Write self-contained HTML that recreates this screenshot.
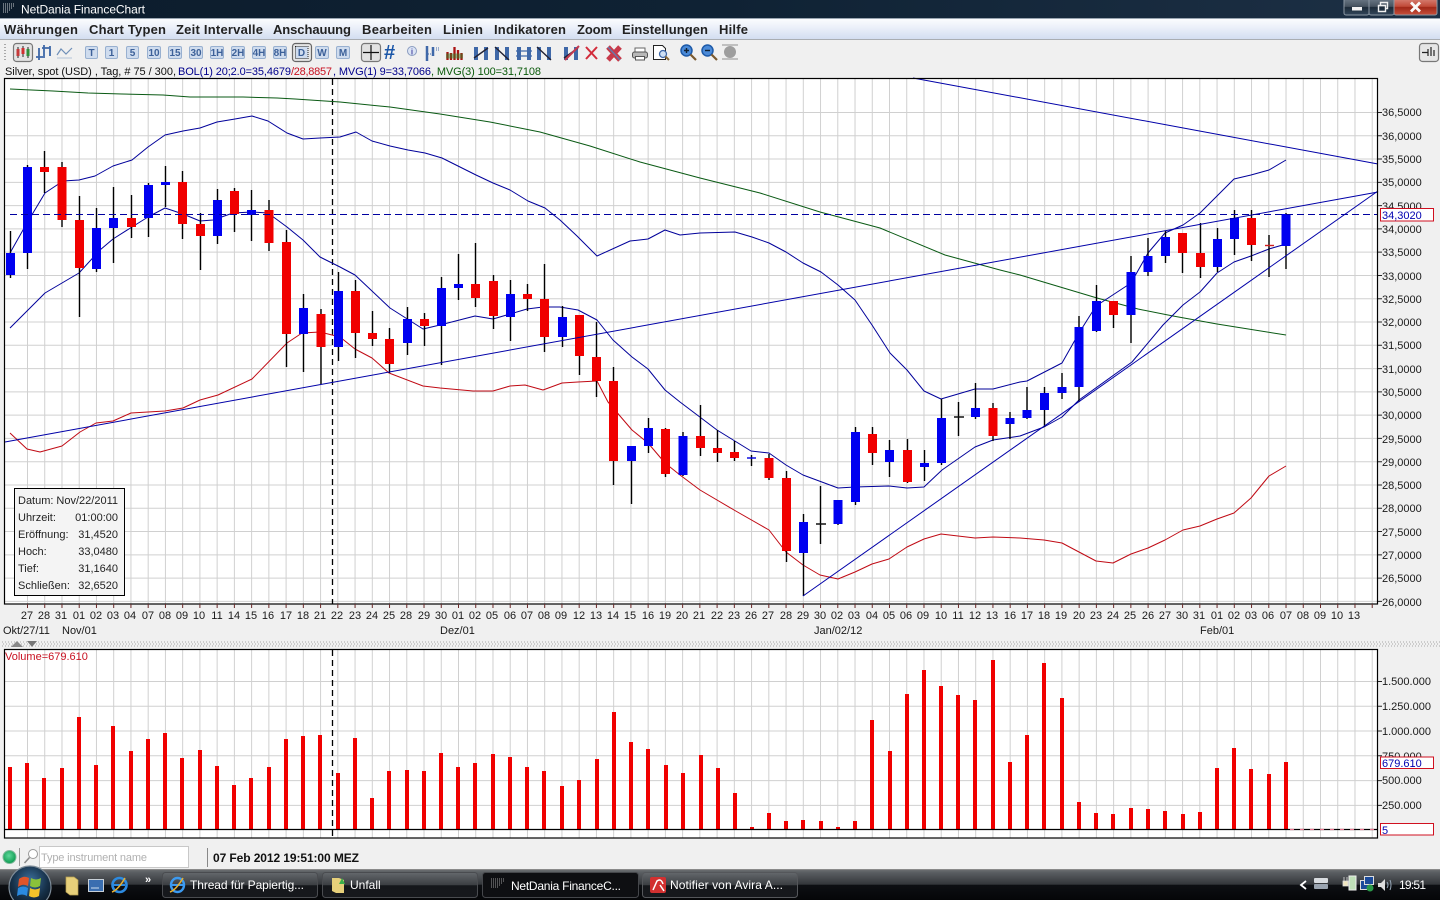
<!DOCTYPE html>
<html lang="de">
<head>
<meta charset="utf-8">
<title>NetDania FinanceChart</title>
<style>
html,body{margin:0;padding:0;width:1440px;height:900px;overflow:hidden;background:#f0f0f0}
svg{display:block;font-family:"Liberation Sans",Arial,sans-serif}
.ax{font-size:11px;fill:#1a1a1a}
.tb{font-size:10px;font-weight:bold;fill:#3d6199;text-anchor:middle}
.mn{font-size:13px;font-weight:bold;fill:#222}
.task{font-size:12px;fill:#fff}
.inf{font-size:11px;fill:#222}
</style>
</head>
<body>
<svg width="1440" height="900" viewBox="0 0 1440 900" xmlns="http://www.w3.org/2000/svg">
<defs>
<linearGradient id="gTitle" x1="0" x2="1" y1="0" y2="0"><stop offset="0" stop-color="#0c1c2c"/><stop offset=".5" stop-color="#0f2234"/><stop offset="1" stop-color="#1d3045"/></linearGradient>
<linearGradient id="gMenu" x1="0" x2="0" y1="0" y2="1"><stop offset="0" stop-color="#fbfcfe"/><stop offset=".35" stop-color="#eef2fa"/><stop offset="1" stop-color="#d3def1"/></linearGradient>
<linearGradient id="gBar" x1="0" x2="0" y1="0" y2="1"><stop offset="0" stop-color="#6a6d70"/><stop offset=".08" stop-color="#5a5e62"/><stop offset=".48" stop-color="#33363a"/><stop offset=".5" stop-color="#0d0f13"/><stop offset="1" stop-color="#050608"/></linearGradient>
<linearGradient id="gBtn" x1="0" x2="0" y1="0" y2="1"><stop offset="0" stop-color="#64686c"/><stop offset=".5" stop-color="#3b3e42"/><stop offset=".52" stop-color="#15171b"/><stop offset="1" stop-color="#16181c"/></linearGradient>
<linearGradient id="gCtl" x1="0" x2="0" y1="0" y2="1"><stop offset="0" stop-color="#6f7c8a"/><stop offset=".5" stop-color="#46525f"/><stop offset=".55" stop-color="#1c2a38"/><stop offset="1" stop-color="#33465a"/></linearGradient>
<linearGradient id="gClose" x1="0" x2="0" y1="0" y2="1"><stop offset="0" stop-color="#d8867a"/><stop offset=".5" stop-color="#c14a38"/><stop offset=".55" stop-color="#a02818"/><stop offset="1" stop-color="#c8503c"/></linearGradient>
<radialGradient id="gOrb" cx=".5" cy=".35" r=".7"><stop offset="0" stop-color="#3c6f9c"/><stop offset=".6" stop-color="#163048"/><stop offset="1" stop-color="#0a1420"/></radialGradient>
<radialGradient id="gLed" cx=".45" cy=".4" r=".6"><stop offset="0" stop-color="#5fd89a"/><stop offset="1" stop-color="#0c9a50"/></radialGradient>
<g id="t1" fill="none"><path d="M3 2V15M13 2V15" stroke="#3f68a8" stroke-width="4"/><path d="M1 13L15 3" stroke="#223" stroke-width="1.400"/></g>
<g id="t2" fill="none"><path d="M3 2V15M13 2V15" stroke="#3f68a8" stroke-width="4"/><path d="M1 2L15 15" stroke="#223" stroke-width="1.400"/></g>
<g id="t3" fill="none"><path d="M3 2V15M13 2V15" stroke="#3f68a8" stroke-width="4"/><path d="M0 6H16M0 11H16" stroke="#3f68a8" stroke-width="1.200"/></g>
</defs>

<rect width="1440" height="900" fill="#f0f0f0"/>

<!-- title bar -->
<rect width="1440" height="18" fill="url(#gTitle)"/>
<rect y="18" width="1440" height="1" fill="#9aa6b2"/>
<path d="M3 4H15M3 6H15M3 8H13M3 10H11M3 12H9" stroke="#c8ccd0" stroke-width="1" stroke-dasharray="1 1"/>
<text x="21" y="13.500" font-size="12" fill="#fff" textLength="124" lengthAdjust="spacing">NetDania FinanceChart</text>
<rect x="1344" y="-2" width="25" height="17" rx="2" fill="url(#gCtl)" stroke="#8c98a4"/>
<rect x="1369" y="-2" width="25" height="17" rx="2" fill="url(#gCtl)" stroke="#8c98a4"/>
<rect x="1394" y="-2" width="43" height="17" rx="2" fill="url(#gClose)" stroke="#8c98a4"/>
<rect x="1352" y="7" width="10" height="3.500" fill="#f2f2f2"/>
<path d="M1378.500 5.500h7v6h-7zM1380.500 5V2.500h7v6h-2" fill="none" stroke="#f0f0f0" stroke-width="1.400"/>
<path d="M1411 2.500L1420 11.500M1420 2.500L1411 11.500" stroke="#fafafa" stroke-width="2.800"/>

<!-- menu -->
<rect y="19" width="1440" height="20" fill="url(#gMenu)"/>
<rect y="39" width="1440" height="1" fill="#a9adb2"/>
<text class="mn" x="4" y="34" textLength="74" lengthAdjust="spacing">Währungen</text>
<text class="mn" x="89" y="34" textLength="77" lengthAdjust="spacing">Chart Typen</text>
<text class="mn" x="176" y="34" textLength="87" lengthAdjust="spacing">Zeit Intervalle</text>
<text class="mn" x="273" y="34" textLength="78" lengthAdjust="spacing">Anschauung</text>
<text class="mn" x="362" y="34" textLength="70" lengthAdjust="spacing">Bearbeiten</text>
<text class="mn" x="443" y="34" textLength="40" lengthAdjust="spacing">Linien</text>
<text class="mn" x="494" y="34" textLength="72" lengthAdjust="spacing">Indikatoren</text>
<text class="mn" x="577" y="34" textLength="35" lengthAdjust="spacing">Zoom</text>
<text class="mn" x="622" y="34" textLength="86" lengthAdjust="spacing">Einstellungen</text>
<text class="mn" x="719" y="34" textLength="29" lengthAdjust="spacing">Hilfe</text>

<!-- toolbar -->
<path d="M5 44V62" stroke="#a8a8a8" stroke-width="2" stroke-dasharray="1 2"/>
<rect x="13.500" y="43.500" width="19" height="18" rx="3" fill="#e4e4e4" stroke="#777" stroke-width="1.200"/>
<path d="M18 47V58M23 46V57M28 47V58" stroke="#222" stroke-width="1"/>
<rect x="16.500" y="49" width="3" height="7" fill="#c53a3a"/><rect x="21.500" y="48" width="3" height="6" fill="#d03030"/><rect x="26.500" y="49" width="3" height="7" fill="#2f8f3a"/>
<path d="M39 48V60M44 45V56M50 46V56M36 57H45M42 48H50" fill="none" stroke="#3f68a8" stroke-width="1.800"/>
<path d="M57 55L61 49L66 54L72 48" fill="none" stroke="#6f8fb8" stroke-width="1.200"/><path d="M57 58H72" stroke="#b4c4d8"/>

<g fill="#cfdcee" stroke="#98b0d0">
<rect x="85.500" y="46.500" width="12" height="12" rx="1.500"/>
<rect x="105.500" y="46.500" width="12" height="12" rx="1.500"/>
<rect x="126.500" y="46.500" width="12" height="12" rx="1.500"/>
<rect x="147.500" y="46.500" width="13" height="12" rx="1.500"/>
<rect x="168.500" y="46.500" width="13" height="12" rx="1.500"/>
<rect x="189.500" y="46.500" width="13" height="12" rx="1.500"/>
<rect x="210.500" y="46.500" width="13" height="12" rx="1.500"/>
<rect x="231.500" y="46.500" width="13" height="12" rx="1.500"/>
<rect x="252.500" y="46.500" width="13" height="12" rx="1.500"/>
<rect x="273.500" y="46.500" width="13" height="12" rx="1.500"/>
<rect x="315.500" y="46.500" width="13" height="12" rx="1.500"/>
<rect x="336.500" y="46.500" width="13" height="12" rx="1.500"/>
</g>
<rect x="292.500" y="43.500" width="19" height="18" rx="3" fill="#e6e6e6" stroke="#666" stroke-width="1.200"/>
<rect x="295.500" y="46.500" width="12.500" height="12" fill="#cfdcee" stroke="#222" stroke-dasharray="1 1"/>
<text class="tb" x="91.500" y="56">T</text><text class="tb" x="111.500" y="56">1</text><text class="tb" x="132.500" y="56">5</text>
<text class="tb" x="154" y="56">10</text><text class="tb" x="175" y="56">15</text><text class="tb" x="196" y="56">30</text>
<text class="tb" x="217" y="56">1H</text><text class="tb" x="238" y="56">2H</text><text class="tb" x="259" y="56">4H</text><text class="tb" x="280" y="56">8H</text>
<text class="tb" x="301.500" y="56">D</text><text class="tb" x="322" y="56">W</text><text class="tb" x="343" y="56">M</text>

<rect x="361.500" y="43.500" width="19" height="18" rx="3" fill="#e2e2e2" stroke="#777" stroke-width="1.200"/>
<path d="M371 45V60M363 52.500H379" stroke="#111" stroke-width="1.200"/>
<text x="384" y="59" font-size="20" font-weight="bold" fill="#1a56a8">#</text>
<circle cx="412" cy="51" r="4.500" fill="#dbe4f4" stroke="#8a9cc0"/><text x="412" y="54.500" font-size="8" font-weight="bold" fill="#5050a8" text-anchor="middle">i</text>
<path d="M427 46V61M433 47V56" stroke="#3f68a8" stroke-width="2.500"/><path d="M436 48H440M436 50H440M426 54H431" stroke="#3f68a8" stroke-dasharray="1 1"/>
<path d="M447.500 52V60M451 53V60M454.500 47V60M458 50V60M461.500 53V60" stroke="#a11" stroke-width="2.300"/><path d="M446 56H463" stroke="#2a8a2a" stroke-width="5" opacity=".45"/>
<use href="#t1" x="473" y="45"/><use href="#t2" x="494" y="45"/><use href="#t3" x="516" y="45"/><use href="#t2" x="536" y="45"/>
<use href="#t1" x="563" y="45"/><path d="M565 60L579 46" stroke="#c23a50" stroke-width="2"/>
<path d="M586 47L597 59M597 47L586 59" stroke="#d22b3a" stroke-width="2"/>
<path d="M608 47L620 60M620 47L608 60" stroke="#c73a4a" stroke-width="5"/><path d="M608 47L620 60" stroke="#6a78a8" stroke-width="1.500"/>
<path d="M635 48h10v4h-10z" fill="#fff" stroke="#666"/><rect x="632.500" y="52" width="15" height="6" rx="2" fill="#b8b8b8" stroke="#555"/><rect x="635.500" y="56.500" width="9" height="3.500" fill="#fff" stroke="#555"/>
<path d="M653.500 45.500h9l3 3v11h-12z" fill="#fff" stroke="#222"/><circle cx="663" cy="54" r="3.500" fill="#cfe0f4" stroke="#3f68a8" stroke-width="1.300"/><path d="M665.500 56.500L669 60" stroke="#8a6a3a" stroke-width="2"/>
<circle cx="686.500" cy="50.500" r="5.500" fill="#4a8ad8" stroke="#1d5aa8" stroke-width="1.500"/><path d="M684 50.500H689M686.500 48V53" stroke="#123" stroke-width="1.400"/><path d="M690.500 54.500L696 60" stroke="#7a5a30" stroke-width="2.200"/>
<circle cx="707.500" cy="50.500" r="5.500" fill="#4a8ad8" stroke="#1d5aa8" stroke-width="1.500"/><path d="M705 50.500H710" stroke="#123" stroke-width="1.400"/><path d="M711.500 54.500L717 60" stroke="#7a5a30" stroke-width="2.200"/>
<circle cx="730" cy="52" r="6" fill="#9e9e9e"/><path d="M722 45H738M722 59H738" stroke="#b0b0b0" stroke-width="1.400"/>
<rect x="1419.500" y="43.500" width="19" height="18" rx="3" fill="#e6e6e6" stroke="#777" stroke-width="1.200"/>
<path d="M1422 52.500H1428M1428 49V56M1431 47V56M1434 50V56" stroke="#222" stroke-width="1.200"/>

<!-- legend line -->
<text x="5" y="75" font-size="11" fill="#111" textLength="171" lengthAdjust="spacing">Silver, spot (USD) , Tag, # 75 / 300,</text>
<text x="178" y="75" font-size="11" fill="#00008c" textLength="113" lengthAdjust="spacing">BOL(1) 20;2.0=35,4679</text>
<text x="291" y="75" font-size="11" fill="#c81020" textLength="41" lengthAdjust="spacing">/28,8857</text>
<text x="333" y="75" font-size="11" fill="#00008c" textLength="98" lengthAdjust="spacing">, MVG(1) 9=33,7066</text>
<text x="431" y="75" font-size="11" fill="#0a5a0a" textLength="110" lengthAdjust="spacing">, MVG(3) 100=31,7108</text>

<!-- main chart -->
<rect x="5" y="78" width="1373" height="526" fill="#fff"/>
<line x1="27" y1="341" x2="1376" y2="341" stroke="#d0d0d0" stroke-width="525" stroke-dasharray="1 16.240"/>
<line x1="691" y1="112" x2="691" y2="603" stroke="#d0d0d0" stroke-width="1372" stroke-dasharray="1 22.280"/>

<path d="M332.500 79V604" stroke="#000" stroke-width="1.300" stroke-dasharray="6 4"/>

<g fill="none" stroke-linejoin="round">
<path d="M10 89L53 91L88 93L122 94L163 95L190 97L243 97L277 98L295 99L340 102L390 107L440 114L490 122L540 132L590 146L640 162L700 178L760 193L820 212L880 228L945 255L1000 270L1020 275L1097 298L1138 309L1173 316L1217 324L1286 335" stroke="#0a5a14" stroke-width="1"/>
<path d="M10 253L23 230L33 213L45 193L63 181L79 180L95 176L113 166L132 160L148 147L165 135L183 131L200 128L217 122L235 119L252 116L268 121L287 133L303 139L320 138L340 137L356 132L372 141L390 146L408 150L425 153L442 158L458 166L476 175L493 183L510 190L528 201L545 208L560 220L577 236L597 256L630 241L648 239L665 230L680 235L700 233L735 232L752 237L769 243L786 252L803 263L821 272L838 285L855 300L872 325L890 353L907 370L924 391L941 399L975 389L993 389L1020 382L1027 381L1062 363L1079 333L1096 306L1131 283L1148 253L1165 233L1183 225L1200 213L1223 190L1234 179L1251 175L1269 170L1286 160" stroke="#00009a" stroke-width="1"/>
<path d="M10 328L45 293L79 273L100 250L113 239L132 227L148 217L165 208L183 214L200 221L213 220L233 213L252 212L268 213L287 227L303 240L320 257L340 267L355 275L390 308L423 329L440 325L475 316L493 319L527 309L543 307L560 307L578 310L597 320L613 340L632 357L648 369L665 390L680 402L717 430L751 451L769 453L786 465L803 475L838 488L855 487L889 486L907 488L924 487L942 470L975 447L993 440L1020 436L1044 427L1062 417L1079 400L1132 362L1163 325L1183 305L1200 292L1217 273L1234 262L1251 256L1269 249L1286 244" stroke="#00009a" stroke-width="1"/>
<path d="M10 433L27 449L40 452L62 446L80 432L96 423L113 421L131 413L148 412L165 411L183 408L200 400L218 395L252 379L287 343L302 333L320 332L340 337L355 349L372 358L389 373L423 386L440 388L473 391L493 391L510 386L525 385L543 390L562 383L578 382L597 381L608 402L632 430L648 443L665 463L680 475L700 490L734 510L769 530L786 552L803 565L820 575L838 579L855 572L872 564L889 559L907 547L924 539L941 534L975 538L993 537L1020 538L1044 540L1062 543L1079 552L1096 561L1113 563L1131 554L1148 548L1165 540L1183 530L1200 526L1217 519L1234 513L1251 498L1269 476L1286 466" stroke="#c00a14" stroke-width="1"/>
</g>

<!-- wicks -->
<path stroke="#000" stroke-width="1.400" fill="none" d="M10.500 231V278M27.500 165V269M44.500 151V193M62 162V227M79.500 196V317M96.500 208V272M113.500 187V263M131.500 195V238M148.500 183V237M165.500 166V207M182.500 171V239M200.500 213V270M217.500 189V244M234.500 188V232M251.500 190V241M269 200V251M286.500 230V367M303.500 294V372M321 309V384M338.500 272V361M355.500 280V358M372.500 311V346M389.500 328V373M407.500 307V355M424.500 313V346M441.500 277V365M458.500 254V300M475.500 243V307M493.500 275V329M510.500 280V341M527.500 284V311M544.500 264V352M562.500 306V347M579.500 315V375M596.500 322V397M613.500 367V485M631.500 446V504M648.500 418V453M665.500 428V477M683 432V476M700.500 405V456M717.500 430V462M734.500 441V461M751.500 455V466M769 454V480M786.500 471V562M803.500 514V596M820.500 486V544M838 500V525M855.500 427V505M872.500 427V465M889.500 440V477M907.500 439V483M924.500 450V481M941.500 399V465M958.500 402V436M975.500 383V419M993 403V441M1010 412V439M1027 387V419M1044.500 387V427M1062 373V399M1079 316V402M1096.500 285V332M1113.500 301V328M1131 256V343M1148 238V276M1165.500 231V263M1182.500 233V273M1200.500 223V278M1217.500 228V272M1234.500 210V255M1251.500 210V261M1269 235V277M1286 213V269"/>
<!-- doji ticks -->
<path d="M747 458H756" stroke="#0000e0" stroke-width="1.400"/>
<path d="M816 524H826M954 417H964" stroke="#111" stroke-width="1.400"/>
<path d="M1265 245.500H1274" stroke="#d02020" stroke-width="1.400"/>
<!-- red bodies -->
<path stroke="#f00000" stroke-width="9" fill="none" d="M44.500 167V172M62 167V220M79.500 220V268M131.500 218V227M182.500 182V224M200.500 224V236M234.500 191V214M269 210V243M286.500 242V334M321 314V347M355.500 291V333M372.500 333V339M389.500 339V364M424.500 319V326M475.500 284V298M493.500 281V316M527.500 294V299M544.500 299V337M579.500 315V356M596.500 357V381M613.500 381V461M665.500 429V474M700.500 436V448M717.500 448V453M734.500 452V458M769 458V478M786.500 478V551M872.500 434V453M907.500 450V482M993 408V436M1113.500 301V315M1182.500 233V253M1200.500 253V267M1251.500 218V245"/>
<!-- blue bodies -->
<path stroke="#0000f0" stroke-width="9" fill="none" d="M10.500 253V275M27.500 167V253M96.500 228V269M113.500 218V228M148.500 185V218M165.500 182V185M217.500 200V236M251.500 210V215M303.500 308V334M338.500 291V347M407.500 319V343M441.500 288V326M458.500 284V288M510.500 294V317M562.500 317V337M631.500 446V461M648.500 428V446M683 436V475M803.500 522V553M838 500V524M855.500 432V502M889.500 450V462M924.500 463V467M941.500 418V463M975.500 408V417M1010 418V424M1027 410V418M1044.500 393V410M1062 387V393M1079 327V387M1096.500 301V331M1131 272V315M1148 256V272M1165.500 237V256M1217.500 239V267M1234.500 218V239M1286 214V246"/>

<!-- trend lines on top -->
<g fill="none" stroke="#0000a8" stroke-width="1">
<path d="M5 442L1378 192"/>
<path d="M913 78L1378 164"/>
<path d="M803 596L1378 191"/>
</g>
<path d="M10 214.500H1378" stroke="#0000a0" stroke-width="1.100" stroke-dasharray="7 4"/>

<!-- info box -->
<rect x="14.500" y="488.500" width="110" height="107" fill="#f4f4f4" stroke="#000"/>
<g class="inf" font-size="11">
<text class="inf" x="18" y="504">Datum:</text><text class="inf" x="118" y="504" text-anchor="end">Nov/22/2011</text>
<text class="inf" x="18" y="521">Uhrzeit:</text><text class="inf" x="118" y="521" text-anchor="end">01:00:00</text>
<text class="inf" x="18" y="538">Eröffnung:</text><text class="inf" x="118" y="538" text-anchor="end">31,4520</text>
<text class="inf" x="18" y="555">Hoch:</text><text class="inf" x="118" y="555" text-anchor="end">33,0480</text>
<text class="inf" x="18" y="572">Tief:</text><text class="inf" x="118" y="572" text-anchor="end">31,1640</text>
<text class="inf" x="18" y="589">Schließen:</text><text class="inf" x="118" y="589" text-anchor="end">32,6520</text>
</g>

<rect x="4.500" y="78.500" width="1373" height="525.500" fill="none" stroke="#000" stroke-width="1.200"/>

<!-- axis ticks -->
<line x1="1380" y1="112" x2="1380" y2="603" stroke="#222" stroke-width="4" stroke-dasharray="1 22.280"/>
<line x1="27" y1="606" x2="1376" y2="606" stroke="#6a2a2a" stroke-width="4" stroke-dasharray="1 16.240"/>

<!-- right axis labels -->
<g class="ax">
<text class="ax" x="1382" y="116">36,5000</text><text class="ax" x="1382" y="140">36,0000</text><text class="ax" x="1382" y="163">35,5000</text><text class="ax" x="1382" y="186">35,0000</text><text class="ax" x="1382" y="210">34,5000</text><text class="ax" x="1382" y="233">34,0000</text><text class="ax" x="1382" y="256">33,5000</text><text class="ax" x="1382" y="280">33,0000</text><text class="ax" x="1382" y="303">32,5000</text><text class="ax" x="1382" y="326">32,0000</text><text class="ax" x="1382" y="349">31,5000</text><text class="ax" x="1382" y="373">31,0000</text><text class="ax" x="1382" y="396">30,5000</text><text class="ax" x="1382" y="419">30,0000</text><text class="ax" x="1382" y="443">29,5000</text><text class="ax" x="1382" y="466">29,0000</text><text class="ax" x="1382" y="489">28,5000</text><text class="ax" x="1382" y="512">28,0000</text><text class="ax" x="1382" y="536">27,5000</text><text class="ax" x="1382" y="559">27,0000</text><text class="ax" x="1382" y="582">26,5000</text><text class="ax" x="1382" y="606">26,0000</text>
</g>
<rect x="1380.500" y="208.500" width="53" height="12.500" fill="#fff" stroke="#d01020"/>
<text x="1382" y="219" font-size="11" fill="#0000b0">34,3020</text>

<!-- bottom axis labels -->
<g transform="translate(1 0)" text-anchor="middle" font-size="11" fill="#1a1a1a">
<text x="26" y="619">27</text><text x="43" y="619">28</text><text x="60" y="619">31</text><text x="78" y="619">01</text><text x="95" y="619">02</text><text x="112" y="619">03</text><text x="129" y="619">04</text><text x="147" y="619">07</text><text x="164" y="619">08</text><text x="181" y="619">09</text><text x="198" y="619">10</text><text x="216" y="619">11</text><text x="233" y="619">14</text><text x="250" y="619">15</text><text x="267" y="619">16</text><text x="285" y="619">17</text><text x="302" y="619">18</text><text x="319" y="619">21</text><text x="336" y="619">22</text><text x="354" y="619">23</text><text x="371" y="619">24</text><text x="388" y="619">25</text><text x="405" y="619">28</text><text x="423" y="619">29</text><text x="440" y="619">30</text><text x="457" y="619">01</text><text x="474" y="619">02</text><text x="491" y="619">05</text><text x="509" y="619">06</text><text x="526" y="619">07</text><text x="543" y="619">08</text><text x="560" y="619">09</text><text x="578" y="619">12</text><text x="595" y="619">13</text><text x="612" y="619">14</text><text x="629" y="619">15</text><text x="647" y="619">16</text><text x="664" y="619">19</text><text x="681" y="619">20</text><text x="698" y="619">21</text><text x="716" y="619">22</text><text x="733" y="619">23</text><text x="750" y="619">26</text><text x="767" y="619">27</text><text x="785" y="619">28</text><text x="802" y="619">29</text><text x="819" y="619">30</text><text x="836" y="619">02</text><text x="853" y="619">03</text><text x="871" y="619">04</text><text x="888" y="619">05</text><text x="905" y="619">06</text><text x="922" y="619">09</text><text x="940" y="619">10</text><text x="957" y="619">11</text><text x="974" y="619">12</text><text x="991" y="619">13</text><text x="1009" y="619">16</text><text x="1026" y="619">17</text><text x="1043" y="619">18</text><text x="1060" y="619">19</text><text x="1078" y="619">20</text><text x="1095" y="619">23</text><text x="1112" y="619">24</text><text x="1129" y="619">25</text><text x="1147" y="619">26</text><text x="1164" y="619">27</text><text x="1181" y="619">30</text><text x="1198" y="619">31</text><text x="1216" y="619">01</text><text x="1233" y="619">02</text><text x="1250" y="619">03</text><text x="1267" y="619">06</text><text x="1285" y="619">07</text><text x="1302" y="619">08</text><text x="1319" y="619">09</text><text x="1336" y="619">10</text><text x="1353" y="619">13</text>
</g>
<text class="ax" x="3" y="634">Okt/27/11</text><text class="ax" x="62" y="634">Nov/01</text><text class="ax" x="440" y="634">Dez/01</text><text class="ax" x="814" y="634">Jan/02/12</text><text class="ax" x="1200" y="634">Feb/01</text>

<!-- splitter -->
<path d="M2 642H1440M3 644H1440M2 646H1440" stroke="#a8a8a8" stroke-width="1" stroke-dasharray="1 2"/>
<path d="M11 647L17 641L23 647Z" fill="#888"/><path d="M27 641H37L32 647Z" fill="#777"/>

<!-- volume chart -->
<rect x="5" y="649" width="1373" height="189" fill="#fff"/>
<line x1="27" y1="744" x2="1376" y2="744" stroke="#d0d0d0" stroke-width="189" stroke-dasharray="1 16.240"/>
<line x1="691" y1="681" x2="691" y2="806" stroke="#d0d0d0" stroke-width="1372" stroke-dasharray="1 23.770"/>
<path d="M332.500 650V836" stroke="#000" stroke-width="1.300" stroke-dasharray="6 4"/>
<path stroke="#f00000" stroke-width="4" fill="none" d="M10 829V767M27 829V763M44 829V778M62 829V768M79 829V717M96 829V765M113 829V726M131 829V751M148 829V739M165 829V733M182 829V758M200 829V750M217 829V766M234 829V785M251 829V778M269 829V767M286 829V739M303 829V736M320 829V735M338 829V773M355 829V738M372 829V798M389 829V771M407 829V770M424 829V771M441 829V753M458 829V767M475 829V763M493 829V754M510 829V757M527 829V767M544 829V771M562 829V786M579 829V780M597 829V759M614 829V712M631 829V742M648 829V749M666 829V765M683 829V773M701 829V755M718 829V768M735 829V793M752 829V827M769 829V813M786 829V821M803 829V820M821 829V821M838 829V827M855 829V821M872 829V720M890 829V751M907 829V694M924 829V670M941 829V686M958 829V695M975 829V700M993 829V660M1010 829V762M1027 829V735M1044 829V663M1062 829V698M1079 829V802M1096 829V813M1113 829V814M1131 829V808M1148 829V809M1165 829V811M1183 829V814M1200 829V812M1217 829V768M1234 829V748M1251 829V769M1269 829V774M1286 829V762"/>
<path d="M5 829.500H1378" stroke="#000" stroke-width="1.300"/>
<path d="M1290 829.500H1378" stroke="#e87890" stroke-width="1.300" stroke-dasharray="4 6"/>
<text x="5" y="660" font-size="11" fill="#c81020">Volume=679.610</text>
<rect x="4.500" y="649.500" width="1373" height="188.500" fill="none" stroke="#000" stroke-width="1.200"/>
<line x1="1380" y1="681" x2="1380" y2="806" stroke="#222" stroke-width="4" stroke-dasharray="1 23.770"/>
<text class="ax" x="1382" y="685">1.500.000</text><text class="ax" x="1382" y="710">1.250.000</text><text class="ax" x="1382" y="735">1.000.000</text><text class="ax" x="1382" y="760">750.000</text><text class="ax" x="1382" y="784">500.000</text><text class="ax" x="1382" y="809">250.000</text>
<rect x="1380.500" y="757" width="53" height="11.500" fill="#fff" stroke="#d01020"/>
<text x="1382" y="767" font-size="11" fill="#0000b0">679.610</text>
<rect x="1380.500" y="823.500" width="53" height="11.500" fill="#fff" stroke="#d01020"/>
<text x="1382" y="834" font-size="11" fill="#0000b0">5</text>

<!-- status bar -->
<circle cx="9.500" cy="857" r="6.500" fill="url(#gLed)" stroke="#7fb89a"/>
<path d="M19.500 848V866" stroke="#999"/>
<circle cx="33" cy="854" r="4.500" fill="#fff" stroke="#999"/><path d="M29.500 857.500L24.500 863" stroke="#888" stroke-width="1.500"/>
<rect x="39.500" y="846.500" width="149" height="21" fill="#fff" stroke="#c8c8c8"/>
<text x="41" y="861" font-size="11" fill="#b0b0b0" textLength="106" lengthAdjust="spacing">Type instrument name</text>
<path d="M207.500 848V867" stroke="#888"/>
<text x="213" y="862" font-size="12" font-weight="bold" fill="#111" textLength="146" lengthAdjust="spacing">07 Feb 2012 19:51:00 MEZ</text>

<!-- taskbar -->
<rect y="870" width="1440" height="30" fill="url(#gBar)"/>
<rect y="869" width="1440" height="1" fill="#8a8a8a"/>
<rect x="162.500" y="872.500" width="155" height="25" rx="3" fill="url(#gBtn)" stroke="#4a4c50"/>
<rect x="322.500" y="872.500" width="155" height="25" rx="3" fill="url(#gBtn)" stroke="#4a4c50"/>
<rect x="482.500" y="872.500" width="156" height="25" rx="3" fill="#0e0f12" stroke="#45474b"/>
<rect x="642.500" y="872.500" width="155" height="25" rx="3" fill="url(#gBtn)" stroke="#55575b"/>

<circle cx="30" cy="887" r="21" fill="url(#gOrb)" stroke="#7e8c98" stroke-width="1.200"/>
<path d="M19 879Q24 875 29 878L28 886Q23 883 18 887Z" fill="#e0552a"/>
<path d="M31 878Q36 881 41 878L40 886Q35 889 30 886Z" fill="#8ac23a"/>
<path d="M18 888Q23 885 28 888L27 896Q22 893 17 896Z" fill="#2a8ae0"/>
<path d="M30 888Q35 891 40 888L39 896Q34 899 29 896Z" fill="#f2c32a"/>

<path d="M66 877h8l4 3v15H70l-4-3z" fill="#e6cf7a" stroke="#b8a050" stroke-width=".7"/>
<rect x="88.500" y="879.500" width="15" height="12" fill="#3a6eb0" stroke="#c8d0d8"/>
<path d="M91 888H99" stroke="#cde" stroke-width="1"/>
<ellipse cx="119.500" cy="885" rx="7" ry="7" fill="none" stroke="#2c8ae0" stroke-width="2.600"/><path d="M113 885H125" stroke="#2c8ae0" stroke-width="2"/><path d="M112 892Q118 890 125 878" fill="none" stroke="#e8b030" stroke-width="1.500"/>
<text x="145" y="883" font-size="11" font-weight="bold" fill="#fff">»</text>

<g transform="translate(58 0)">
<ellipse cx="119.500" cy="885" rx="6.500" ry="7" fill="none" stroke="#3c9af0" stroke-width="2.400"/><path d="M113 885H125" stroke="#3c9af0" stroke-width="2"/><path d="M112 892Q118 890 125 878" fill="none" stroke="#e8b030" stroke-width="1.500"/>
</g>
<text class="task" x="190" y="889" textLength="114" lengthAdjust="spacing">Thread für Papiertig...</text>
<path d="M332 878h7l5 2v13h-8l-4-2z" fill="#e6cf7a"/><path d="M339 884L342 878L345 884Z" fill="#3ab04a"/>
<text class="task" x="350" y="889">Unfall</text>
<path d="M491 879H505M491 881H505M491 883H503M491 885H501M491 887H499" stroke="#9a9a9a" stroke-dasharray="1 1"/>
<text class="task" x="511" y="890" textLength="110" lengthAdjust="spacing">NetDania FinanceC...</text>
<rect x="650" y="877" width="16" height="16" rx="2" fill="#d23030"/>
<path d="M653 890L657 881Q661 878 663 884M660 885L664 891" fill="none" stroke="#fff" stroke-width="1.500"/>
<text class="task" x="670" y="889" textLength="113" lengthAdjust="spacing">Notifier von Avira A...</text>

<path d="M1306 881L1301 885L1306 889" fill="none" stroke="#fff" stroke-width="1.800"/>
<rect x="1314" y="878" width="14" height="5" rx="1" fill="#d8dce0"/><rect x="1314" y="884" width="14" height="5" rx="1" fill="#9aa4b0"/>
<rect x="1349" y="876" width="7" height="14" fill="#bfe0b8" stroke="#eee"/><path d="M1344 877V881M1347 877V881M1343 881H1348V886H1343Z" fill="#f0e6c0" stroke="#ddd" stroke-width=".8"/>
<rect x="1360.500" y="880.500" width="10" height="9" fill="#1a4a9a" stroke="#ddd"/><rect x="1364.500" y="876.500" width="9" height="8" fill="#1a4a9a" stroke="#ddd"/><circle cx="1370" cy="888" r="3.500" fill="#2a9a4a"/>
<path d="M1378 883H1381L1385 879V891L1381 887H1378Z" fill="#ddd"/><path d="M1387 882Q1389 885 1387 888M1390 880Q1392 885 1390 890" fill="none" stroke="#9ab" stroke-width="1"/>
<text class="task" x="1399" y="889" textLength="27" lengthAdjust="spacing">19:51</text>
</svg>
</body>
</html>
